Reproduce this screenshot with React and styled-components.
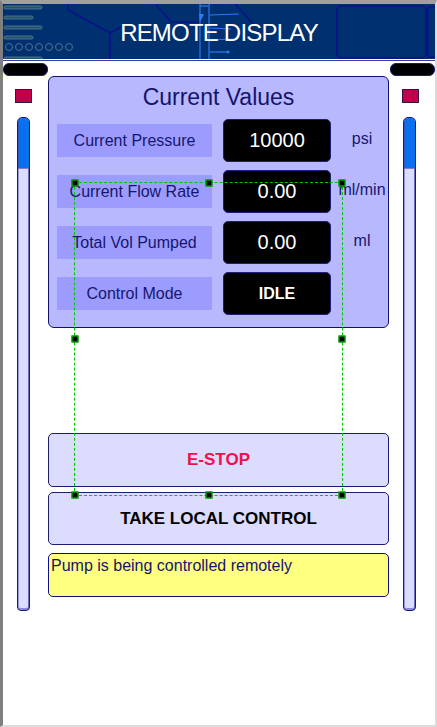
import styled, { createGlobalStyle } from 'styled-components';

/* ---------- globals ---------- */

const Global = createGlobalStyle`
  html, body { margin: 0; padding: 0; background: #fff; }
  * { box-sizing: border-box; }
  body { font-family: "Liberation Sans", Arial, sans-serif; }
`;

/* ---------- frame ---------- */

const Frame = styled.div`
  position: relative;
  width: 437px;
  height: 727px;
  background: #fff;
  border-left: 3px solid #7f7f7f;
  border-top: 4px solid #a0a0a0;
  border-right: 2px solid #dcdcdc;
  border-bottom: 2px solid #dcdcdc;
  display: flex;
  flex-direction: column;
`;

const Header = styled.header`
  position: relative;
  height: 55px;
  background: #00306f;
  display: flex;
  align-items: center;
  justify-content: center;
  overflow: hidden;
`;

const HeaderArt = styled.svg`
  position: absolute;
  inset: 0;
  width: 100%;
  height: 100%;
`;

const Title = styled.h1`
  position: relative;
  margin: 0;
  padding-top: 2px;
  color: #fff;
  font-size: 24px;
  font-weight: 400;
  letter-spacing: -0.8px;
`;

const Rule = styled.div`
  height: 1px;
  margin-top: 1px;
  background: #3a3a9a;
`;

const Body = styled.div`
  display: grid;
  grid-template-columns: 45px 341px 46px;
  flex: 1;
`;

/* ---------- side columns ---------- */

const Side = styled.aside`
  display: flex;
  flex-direction: column;
  align-items: flex-start;
  padding-top: 2px;
`;

const Pill = styled.div`
  width: 45px;
  height: 13px;
  margin-left: ${p => p.$offset || 0}px;
  background: #000;
  border: 1.5px solid #1c1c78;
  border-radius: 6px;
`;

const Lamp = styled.div`
  width: 17px;
  height: 14px;
  margin-top: 13px;
  margin-left: ${p => p.$offset}px;
  background: #c2004a;
  border: 1px solid #3a1050;
`;

const Track = styled.div`
  position: relative;
  width: 13px;
  height: 494px;
  margin-top: 14px;
  margin-left: 14px;
  background: #dcdcff;
  border: 1px solid #1a1a7a;
  border-radius: 5px 5px 4px 4px;
  box-shadow: inset 1px 0 0 #9898e0, inset -1px 0 0 #6a6ac0, inset 0 -2px 0 #8a8ad8;
  overflow: hidden;
`;

const TrackFill = styled.div`
  background: #0a70f2;
  border-bottom: 1px solid #7a7ad0;
  box-shadow: inset 1px 0 0 #2a58c8;
  border-radius: 4px 4px 0 0;
`;

/* ---------- center ---------- */

const Center = styled.main`
  display: flex;
  flex-direction: column;
  padding-top: 15px;
`;

const Panel = styled.section`
  height: 252px;
  background: #b8b8ff;
  border: 1px solid #12126a;
  border-radius: 6px;
  padding: 0 0 0 8px;
`;

const PanelTitle = styled.h2`
  margin: 0;
  height: 42px;
  line-height: 40px;
  text-align: center;
  padding-right: 8px;
  color: #14146c;
  font-size: 23px;
  font-weight: 400;
`;

const Rows = styled.div`
  display: flex;
  flex-direction: column;
  gap: 8px;
`;

const Row = styled.div`
  display: grid;
  grid-template-columns: 155px 108px 1fr;
  column-gap: 11px;
  align-items: center;
  height: 43px;
`;

const Label = styled.div`
  height: 33px;
  display: flex;
  align-items: center;
  justify-content: center;
  background: #9c9cff;
  color: #16166e;
  font-size: 16px;
`;

const Value = styled.div`
  height: 43px;
  display: flex;
  align-items: center;
  justify-content: center;
  background: #000;
  border: 1px solid #20207a;
  border-radius: 5px;
  color: #fff;
  font-size: ${p => (p.$bold ? 16 : 20)}px;
  font-weight: ${p => (p.$bold ? 700 : 400)};
`;

const Unit = styled.div`
  text-align: center;
  margin-left: -6px;
  margin-bottom: 4px;
  color: #16166e;
  font-size: 16px;
`;

const Button = styled.button`
  height: ${p => p.$h}px;
  margin-top: ${p => p.$gap}px;
  background: #dcdcff;
  border: 1px solid #1e1e6e;
  border-radius: 5px;
  font-family: "Liberation Sans", Arial, sans-serif;
  font-size: 17px;
  font-weight: 700;
  color: ${p => p.$color};
  padding: 0;
`;

const Status = styled.div`
  height: 44px;
  margin-top: 8px;
  padding: 2px 2px;
  background: #ffff80;
  border: 1px solid #10107a;
  border-radius: 5px;
  color: #14146c;
  font-size: 16px;
  line-height: 19px;
`;

/* ---------- selection overlay ---------- */

const Selection = styled.div`
  position: absolute;
  left: 71px;
  top: 178px;
  width: 269px;
  height: 314px;
  border: 1px dashed #00c800;
  pointer-events: none;
`;

const Handle = styled.span`
  position: absolute;
  width: 7px;
  height: 7px;
  background: #000;
  border: 1px solid #00e000;
  transform: translate(-50%, -50%);
`;

/* ---------- data ---------- */

const ROWS = [
  { label: 'Current Pressure', value: '10000', unit: 'psi' },
  { label: 'Current Flow Rate', value: '0.00', unit: 'ml/min' },
  { label: 'Total Vol Pumped', value: '0.00', unit: 'ml' },
  { label: 'Control Mode', value: 'IDLE', bold: true },
];

const HANDLES = [
  [0, 0], [50, 0], [100, 0],
  [0, 50], [100, 50],
  [0, 100], [50, 100], [100, 100],
];

function Decor() {
  return (
    <HeaderArt viewBox="0 0 432 55" preserveAspectRatio="none">
      {/* left bars */}
      {[[2, 38], [12, 29], [22, 38], [32, 29]].map(([y, w]) => (
        <rect key={y} x="1" y={y} width={w} height="3" rx="1.5"
          fill="#1e5470" stroke="#5f7f92" strokeWidth="0.8" />
      ))}
      {[0, 1, 2, 3, 4, 5, 6].map(i => (
        <circle key={i} cx={6 + i * 10} cy="43" r="3.5"
          fill="none" stroke="#4d7290" strokeWidth="1" />
      ))}
      <rect x="1" y="53" width="38" height="3" rx="1.5" fill="#1e5470" stroke="#5f7f92" strokeWidth="0.8" />

      {/* dark circuit lines */}
      <g fill="none" stroke="#0a128a" strokeWidth="1.6">
        <path d="M65 0 V6 L107 29 V55" />
        <path d="M107 29 L118 23" />
        <path d="M154 0 V2 L168 18 H196" />
        <path d="M232 0 L252 22" />
        <path d="M337 2 H420 L423 5 V51 L420 54 H337 L334 51 V5 Z" />
        <path d="M425 3 H432 M425 3 V53 H432" />
      </g>

      {/* bright lightning */}
      <g fill="none" stroke="#2a7cf0" strokeWidth="1.2">
        <path d="M197 0 V55" />
        <path d="M206 0 V55" />
        <path d="M197 2 H205" />
        <path d="M207 11 L236 10" />
        <path d="M207 24 L228 25" />
        <path d="M207 36 L230 35" />
        <path d="M207 48 L224 48" />
      </g>
      <path d="M196 10 L201 10 L197 18 Z" fill="#2a7cf0" />
      <circle cx="225" cy="48" r="1.5" fill="#2a7cf0" />
    </HeaderArt>
  );
}

/* ---------- component ---------- */

export default function App() {
  return (
    <>
      <Global />
      <Frame>
        <Header>
          <Decor />
          <Title>REMOTE DISPLAY</Title>
        </Header>
        <Rule />

        <Body>
          <Side>
            <Pill />
            <Lamp $offset={12} />
            <Track>
              <TrackFill style={{ height: 51 }} />
            </Track>
          </Side>

          <Center>
            <Panel>
              <PanelTitle>Current Values</PanelTitle>
              <Rows>
                {ROWS.map(r => (
                  <Row key={r.label}>
                    <Label>{r.label}</Label>
                    <Value $bold={r.bold}>{r.value}</Value>
                    <Unit>{r.unit}</Unit>
                  </Row>
                ))}
              </Rows>
            </Panel>

            <Button $h={54} $gap={105} $color="#f0104c">E-STOP</Button>
            <Button $h={53} $gap={5} $color="#000">TAKE LOCAL CONTROL</Button>
            <Status>Pump is being controlled remotely</Status>
          </Center>

          <Side>
            <Pill $offset={1} />
            <Lamp $offset={13} />
            <Track>
              <TrackFill style={{ height: 51 }} />
            </Track>
          </Side>
        </Body>

        <Selection>
          {HANDLES.map(([x, y]) => (
            <Handle key={`${x}-${y}`} style={{ left: `${x}%`, top: `${y}%` }} />
          ))}
        </Selection>
      </Frame>
    </>
  );
}
